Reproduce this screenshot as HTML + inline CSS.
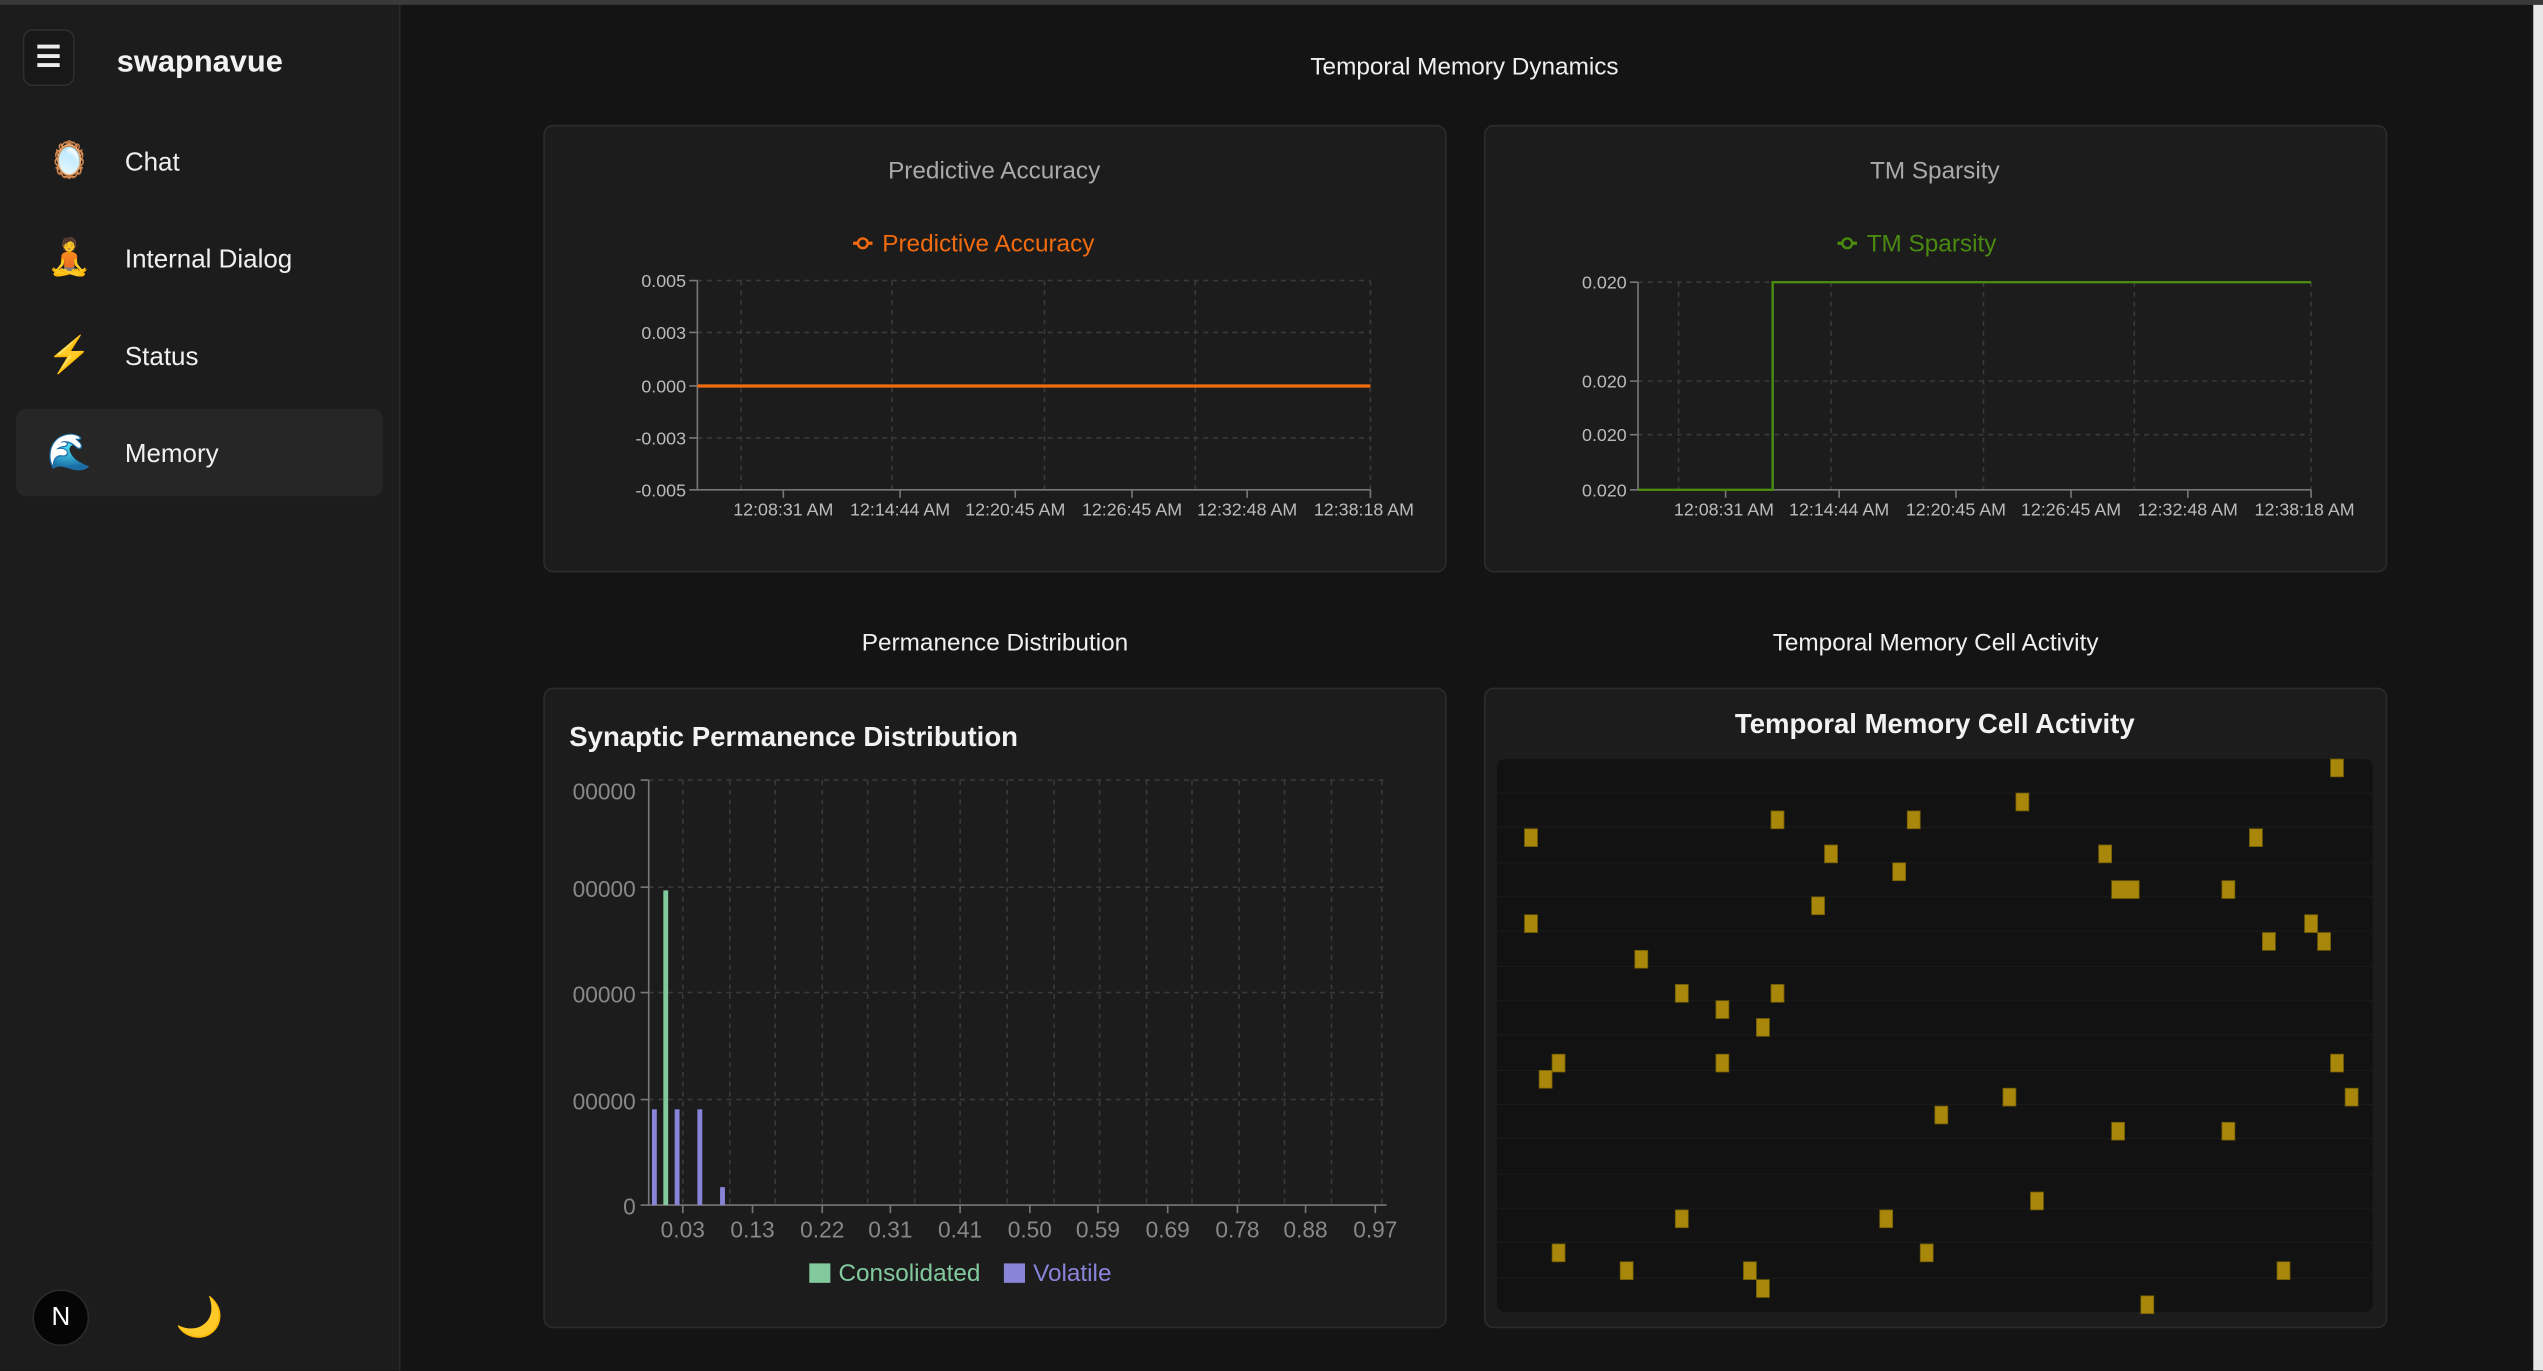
<!DOCTYPE html>
<html><head><meta charset="utf-8"><style>
html,body{margin:0;padding:0;background:#141414;overflow:hidden;width:2543px;height:1371px}
#w{position:absolute;left:0;top:0;width:1568px;height:845px;transform:scale(1.62181);transform-origin:0 0;font-family:"Liberation Sans",sans-serif;background:#141414;color:#eee}
.a{position:absolute}
#side{left:0;top:3px;width:246px;height:842px;background:#1c1c1c;border-right:1px solid #2a2a2a}
.nav{position:absolute;left:10px;width:226px;height:54px;border-radius:6px;font-size:16px;color:#f0f0f0}
.nav span.i{position:absolute;left:19px;top:15px;font-size:22px;font-family:"Noto Color Emoji","DejaVu Sans",sans-serif}
.nav span.t{position:absolute;left:67px;top:20px}
.card{position:absolute;background:#1c1c1c;border:1px solid #2c2c2c;border-radius:6px}
svg text{font-family:"Liberation Sans",sans-serif}
</style></head><body><div id="w">
<div class="a" style="left:0;top:0;width:1568px;height:3px;background:#3a3a3c"></div>
<div class="a" id="side">
 <div class="a" style="left:14px;top:15px;width:30px;height:33px;border:1px solid #2e2e2e;border-radius:6px;background:#181818;color:#eee;font-size:18px;text-align:center;line-height:32px;font-weight:bold">☰</div>
 <div class="a" style="left:72px;top:25px;font-size:19px;font-weight:bold;color:#f2f2f2">swapnavue</div>
 <div class="nav" style="top:69px"><span class="i">🪞</span><span class="t">Chat</span></div>
 <div class="nav" style="top:129px"><span class="i">🧘</span><span class="t">Internal Dialog</span></div>
 <div class="nav" style="top:189px"><span class="i">⚡</span><span class="t">Status</span></div>
 <div class="nav" style="top:249px;background:#262626"><span class="i">🌊</span><span class="t">Memory</span></div>
 <div class="a" style="left:20px;top:792px;width:33px;height:33px;border-radius:50%;background:#050505;border:1px solid #2a2a2a;color:#fff;text-align:center;line-height:33px;font-size:16px">N</div>
 <div class="a" style="left:108px;top:795px;font-size:24px;color:#f7c21b">🌙</div>
</div>
<div class="a" style="left:247px;top:33px;width:1312px;text-align:center;font-size:15px;color:#f0f0f0">Temporal Memory Dynamics</div>
<div class="card" style="left:335px;top:77px;width:555px;height:274px"></div>
<div class="card" style="left:915px;top:77px;width:555px;height:274px"></div>
<div class="a" style="left:335px;top:388px;width:557px;text-align:center;font-size:15px;color:#f0f0f0">Permanence Distribution</div>
<div class="a" style="left:915px;top:388px;width:557px;text-align:center;font-size:15px;color:#f0f0f0">Temporal Memory Cell Activity</div>
<div class="card" style="left:335px;top:424px;width:555px;height:393px"></div>
<div class="card" style="left:915px;top:424px;width:555px;height:393px"></div>
<div class="a" style="left:923px;top:468px;width:540px;height:341px;background:#121212;border-radius:5px"></div>
<div class="a" style="left:1562px;top:3px;width:6px;height:842px;background:#e8e8e8"></div>
<svg class="a" style="left:0;top:0" width="1568" height="845" viewBox="0 0 1568 845">
<g font-size="15" fill="#aaa" text-anchor="middle">
<text x="613" y="110">Predictive Accuracy</text><text x="1193" y="110">TM Sparsity</text></g>
<g font-size="15" text-anchor="start"><text x="544" y="155" fill="#f26b0f">Predictive Accuracy</text><text x="1151" y="155" fill="#4a8a10">TM Sparsity</text></g>
<path d="M526 150h12" stroke="#f26b0f" stroke-width="2"/><circle cx="532" cy="150" r="3" fill="#1c1c1c" stroke="#f26b0f" stroke-width="1.5"/>
<path d="M1133 150h12" stroke="#4a8a10" stroke-width="2"/><circle cx="1139" cy="150" r="3" fill="#1c1c1c" stroke="#4a8a10" stroke-width="1.5"/>
<g stroke="#3a3a3a" stroke-dasharray="3 3" fill="none">
<path d="M430 173H845M430 205H845M430 238H845M430 270H845M457 173V302M550 173V302M644 173V302M737 173V302M845 173V302"/>
<path d="M1010 174H1425M1010 235H1425M1010 268H1425M1035 174V302M1129 174V302M1223 174V302M1316 174V302M1425 174V302"/>
<path d="M400 481H855M400 547H855M400 612H855M400 678H855M421 481V743M450 481V743M478 481V743M507 481V743M535 481V743M564 481V743M592 481V743M621 481V743M650 481V743M678 481V743M707 481V743M735 481V743M764 481V743M792 481V743M821 481V743M852 481V743"/></g>
<g stroke="#777" fill="none">
<path d="M430 173V302H845M425 173h5M425 205h5M425 238h5M425 270h5M425 302h5M483 302v5M555 302v5M626 302v5M698 302v5M769 302v5M845 302v5"/>
<path d="M1010 174V302H1425M1005 174h5M1005 235h5M1005 268h5M1005 302h5M1064 302v5M1134 302v5M1206 302v5M1277 302v5M1349 302v5M1425 302v5"/>
<path d="M400 481V743H855M395 481h5M395 547h5M395 612h5M395 678h5M395 743h5M421 743v5M464 743v5M507 743v5M549 743v5M592 743v5M635 743v5M677 743v5M720 743v5M763 743v5M805 743v5M848 743v5"/></g>
<path d="M430 238H845" stroke="#f26b0f" stroke-width="2"/>
<path d="M1010 302H1093V174H1425" stroke="#4a8a10" stroke-width="1.5" fill="none"/>
<g font-size="11" fill="#bbb" text-anchor="end">
<text x="423" y="177">0.005</text><text x="423" y="209">0.003</text><text x="423" y="242">0.000</text><text x="423" y="274">-0.003</text><text x="423" y="306">-0.005</text>
<text x="1003" y="178">0.020</text><text x="1003" y="239">0.020</text><text x="1003" y="272">0.020</text><text x="1003" y="306">0.020</text></g>
<g font-size="11" fill="#bbb" text-anchor="middle">
<text x="483" y="318">12:08:31 AM</text><text x="555" y="318">12:14:44 AM</text><text x="626" y="318">12:20:45 AM</text><text x="698" y="318">12:26:45 AM</text><text x="769" y="318">12:32:48 AM</text><text x="841" y="318">12:38:18 AM</text>
<text x="1063" y="318">12:08:31 AM</text><text x="1134" y="318">12:14:44 AM</text><text x="1206" y="318">12:20:45 AM</text><text x="1277" y="318">12:26:45 AM</text><text x="1349" y="318">12:32:48 AM</text><text x="1421" y="318">12:38:18 AM</text></g>
<text x="351" y="460" font-size="17" font-weight="bold" fill="#f2f2f2">Synaptic Permanence Distribution</text>
<text x="1193" y="452" font-size="17" font-weight="bold" fill="#f2f2f2" text-anchor="middle">Temporal Memory Cell Activity</text>
<g font-size="14" fill="#888" text-anchor="end">
<text x="392" y="493">00000</text><text x="392" y="553">00000</text><text x="392" y="618">00000</text><text x="392" y="684">00000</text><text x="392" y="749">0</text></g>
<rect x="336" y="480" width="16" height="275" fill="#1c1c1c"/>
<g font-size="14" fill="#888" text-anchor="middle">
<text x="421" y="763">0.03</text><text x="464" y="763">0.13</text><text x="507" y="763">0.22</text><text x="549" y="763">0.31</text><text x="592" y="763">0.41</text><text x="635" y="763">0.50</text><text x="677" y="763">0.59</text><text x="720" y="763">0.69</text><text x="763" y="763">0.78</text><text x="805" y="763">0.88</text><text x="848" y="763">0.97</text></g>
<rect x="409" y="549" width="3" height="194" fill="#82ca9d"/>
<g fill="#8884d8"><rect x="402" y="684" width="3" height="59"/><rect x="416" y="684" width="3" height="59"/><rect x="430" y="684" width="3" height="59"/><rect x="444" y="732" width="3" height="11"/></g>
<rect x="499" y="779" width="13" height="12" fill="#82ca9d"/><text x="517" y="790" font-size="15" fill="#82ca9d">Consolidated</text>
<rect x="619" y="779" width="13" height="12" fill="#8884d8"/><text x="637" y="790" font-size="15" fill="#8884d8">Volatile</text>
<g stroke="#1a1a1a" stroke-width="0.7"><path d="M923 489H1463M923 510H1463M923 532H1463M923 553H1463M923 574H1463M923 596H1463M923 617H1463M923 638H1463M923 660H1463M923 681H1463M923 702H1463M923 724H1463M923 745H1463M923 766H1463M923 788H1463"/></g>
<g fill="#a8870a" stroke="#6e5a08" stroke-width="0.5">
<rect x="1437" y="468" width="8" height="11"/><rect x="940" y="511" width="8" height="11"/><rect x="1092" y="500" width="8" height="11"/><rect x="1176" y="500" width="8" height="11"/><rect x="1243" y="489" width="8" height="11"/><rect x="1125" y="521" width="8" height="11"/><rect x="1167" y="532" width="8" height="11"/><rect x="1294" y="521" width="8" height="11"/><rect x="1387" y="511" width="8" height="11"/><rect x="1117" y="553" width="8" height="11"/><rect x="1302" y="543" width="17" height="11"/><rect x="1370" y="543" width="8" height="11"/><rect x="940" y="564" width="8" height="11"/><rect x="1421" y="564" width="8" height="11"/><rect x="1395" y="575" width="8" height="11"/><rect x="1429" y="575" width="8" height="11"/><rect x="1008" y="586" width="8" height="11"/><rect x="1033" y="607" width="8" height="11"/><rect x="1092" y="607" width="8" height="11"/><rect x="1058" y="617" width="8" height="11"/><rect x="1083" y="628" width="8" height="11"/><rect x="957" y="650" width="8" height="11"/><rect x="1058" y="650" width="8" height="11"/><rect x="1437" y="650" width="8" height="11"/><rect x="949" y="660" width="8" height="11"/><rect x="1235" y="671" width="8" height="11"/><rect x="1446" y="671" width="8" height="11"/><rect x="1193" y="682" width="8" height="11"/><rect x="1302" y="692" width="8" height="11"/><rect x="1370" y="692" width="8" height="11"/><rect x="1252" y="735" width="8" height="11"/><rect x="1033" y="746" width="8" height="11"/><rect x="1159" y="746" width="8" height="11"/><rect x="957" y="767" width="8" height="11"/><rect x="1184" y="767" width="8" height="11"/><rect x="999" y="778" width="8" height="11"/><rect x="1075" y="778" width="8" height="11"/><rect x="1404" y="778" width="8" height="11"/><rect x="1083" y="789" width="8" height="11"/><rect x="1320" y="799" width="8" height="11"/></g>
</svg>
</div></body></html>
